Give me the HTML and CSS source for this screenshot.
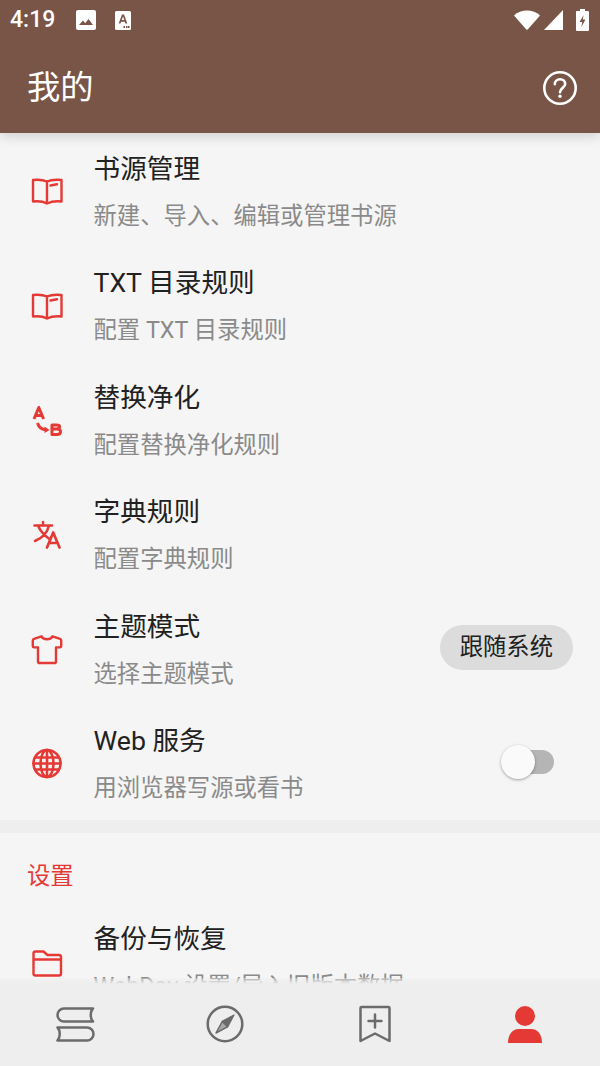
FILE: index.html
```html
<!DOCTYPE html>
<html lang="zh-CN">
<head>
<meta charset="utf-8">
<title>我的</title>
<link rel="stylesheet" href="styles.css">
</head>
<body>
<div class="screen">
  <header class="appbar">
    <div class="status">
      <div class="status-left">
        <span class="time">4:19</span>
        <svg class="st-img" viewBox="0 0 20 20"><path fill="#fff" fill-rule="evenodd" d="M2 0h16a2 2 0 0 1 2 2v16a2 2 0 0 1-2 2H2a2 2 0 0 1-2-2V2a2 2 0 0 1 2-2zM3 15h14l-4.500-6-3.300 4.200-2.200-2.600z"/></svg>
        <svg class="st-a" viewBox="0 0 16 19"><path fill="#fff" fill-rule="evenodd" d="M1.500 0h13A1.500 1.500 0 0 1 16 1.500v16a1.500 1.500 0 0 1-1.500 1.500h-13A1.500 1.500 0 0 1 0 17.500v-16A1.500 1.500 0 0 1 1.500 0zM7 3.500 3.700 12.500h1.800l.6-1.800h3.700l.6 1.800h1.900L9 3.500zM6.700 9.100l1.400-3.700 1.200 3.700zM8.500 15v2h1.500v-2zM11 15v2h1.500v-2zM13 15v2h1.500v-2z"/></svg>
      </div>
      <div class="status-right">
        <svg class="st-wifi" viewBox="0 0 26 20"><path fill="#fff" d="M0 5.500C3.500 2.200 8 .5 13 .5s9.500 1.700 13 5L13.700 19.500a1 1 0 0 1-1.400 0z"/></svg>
        <svg class="st-cell" viewBox="0 0 19 20"><path fill="#fff" d="M19 0v20H0z"/></svg>
        <svg class="st-batt" viewBox="0 0 13 22"><path fill="#fff" fill-rule="evenodd" d="M4 0h5v2h3a1 1 0 0 1 1 1v18a1 1 0 0 1-1 1H1a1 1 0 0 1-1-1V3a1 1 0 0 1 1-1h3zM7.600 6 3.600 13h2.600l-.8 5 4-7.500H6.800z"/></svg>
      </div>
    </div>
    <div class="toolbar">
      <h1 class="title">我的</h1>
      <svg class="help" viewBox="0 0 36 36" fill="none" stroke="#fff" stroke-width="2.600"><circle cx="18" cy="18" r="15.700"/><path stroke-linecap="round" d="M12.800 14.300c0-3 2.300-5 5.200-5s5.200 1.900 5.200 4.700c0 3.800-5.200 4-5.200 8.200"/><circle cx="18" cy="26.300" r="1.700" fill="#fff" stroke="none"/></svg>
    </div>
  </header>

  <main class="content">
    <section class="group">
      <div class="row">
        <svg class="ico" viewBox="0 0 40 40"><path d="M6 9c5-.5 10-.3 14 1.500 4-1.800 9-2 14.500-1.500v21.500c-5.500-.5-10-.2-14.500 2-4-2.200-9-2.500-14-2zM20 10.500V32.500M23.500 14.500l6.500-1.300"/></svg>
        <div class="text"><div class="t">书源管理</div><div class="s">新建、导入、编辑或管理书源</div></div>
      </div>
      <div class="row">
        <svg class="ico" viewBox="0 0 40 40"><path d="M6 9c5-.5 10-.3 14 1.500 4-1.800 9-2 14.500-1.500v21.500c-5.500-.5-10-.2-14.500 2-4-2.200-9-2.500-14-2zM20 10.500V32.500M23.500 14.500l6.500-1.300"/></svg>
        <div class="text"><div class="t">TXT 目录规则</div><div class="s">配置 TXT 目录规则</div></div>
      </div>
      <div class="row">
        <svg class="ico" viewBox="0 0 40 40"><path stroke-width="3" stroke-linecap="butt" d="M7 19 11.800 7.500 16.600 19M8.700 15.500h6.200M10.500 23c1.200 3.800 4 6.300 8 6.800"/><path class="fillr" d="M17.500 26.500l5 3.500-5 3z"/><path stroke-width="3" d="M25 25v9.500h4.800c2.300 0 3.700-1.100 3.700-2.700s-1.300-2.700-3.500-2.700H25h4.500c2 0 3.100-.8 3.100-2.300S31.500 25 29.500 25z"/></svg>
        <div class="text"><div class="t">替换净化</div><div class="s">配置替换净化规则</div></div>
      </div>
      <div class="row">
        <svg class="ico" viewBox="0 0 40 40"><path stroke-width="2.500" d="M7.500 11.500h17.500M16 8v3.500M11 11.500c2.200 5.500 6.500 10 11.500 13.500M22 11.500c-1.500 6.500-6.500 12.500-14 15.500"/><path stroke-width="2.700" d="M20 33.500 26.200 18.500 32.500 33.500M22.200 29h8"/></svg>
        <div class="text"><div class="t">字典规则</div><div class="s">配置字典规则</div></div>
      </div>
      <div class="row">
        <svg class="ico" viewBox="0 0 40 40"><path d="M14.500 7.300c.8 2 3 3 5.500 3s4.700-1 5.500-3l7.500 2.500c.7.200 1.200.8 1.200 1.500v6c0 .6-.5 1.100-1.200 1.100h-4v14c0 .8-.7 1.600-1.500 1.600h-15c-.8 0-1.500-.8-1.500-1.600v-14h-4c-.7 0-1.200-.5-1.200-1.100v-6c0-.7.5-1.300 1.200-1.500z"/></svg>
        <div class="text"><div class="t">主题模式</div><div class="s">选择主题模式</div></div>
        <div class="pill">跟随系统</div>
      </div>
      <div class="row">
        <svg class="ico globe" viewBox="0 0 40 40"><circle cx="20" cy="20.500" r="13.500"/><ellipse cx="20" cy="20.500" rx="6.500" ry="13.500"/><path d="M20 7v27M8.500 14.500h23M8.500 26.500h23M6.500 20.500h27"/></svg>
        <div class="text"><div class="t">Web 服务</div><div class="s">用浏览器写源或看书</div></div>
        <div class="switch"><span class="thumb"></span></div>
      </div>
    </section>
    <div class="divider"></div>
    <section class="group">
      <div class="cat">设置</div>
      <div class="row">
        <svg class="ico" viewBox="0 0 40 40"><path d="M6.500 11.500a2 2 0 0 1 2-2h8l4 3.500H32a2 2 0 0 1 2 2V31.500a2 2 0 0 1-2 2H8.500a2 2 0 0 1-2-2zM6.500 17.500h27.500"/></svg>
        <div class="text"><div class="t">备份与恢复</div><div class="s">WebDav 设置/导入旧版本数据</div></div>
      </div>
    </section>
  </main>

  <nav class="nav">
    <div class="tab"><svg class="nico" viewBox="0 0 40 40"><path d="M38 4.500H9a6.500 6.500 0 0 0 0 13h29M38 4.500c-3 3-3 10 0 13M2.500 23.500h29.500a6.500 6.500 0 0 1 0 13H2.500M2.500 23.500c3 3 3 10 0 13"/></svg></div>
    <div class="tab"><svg class="nico" viewBox="0 0 40 40"><circle cx="20" cy="20" r="17.300"/><path class="grey" d="M29 11 22.800 22.800 17.200 17.200z"/><path class="thin" d="M11 29 17.200 17.500l5.300 5.300z"/></svg></div>
    <div class="tab"><svg class="nico" viewBox="0 0 40 40"><path d="M6.500 3h27a1 1 0 0 1 1 1v33L20 29.500 5.500 37V4a1 1 0 0 1 1-1zM20 10.500v13M13.500 17h13"/></svg></div>
    <div class="tab"><svg class="nico active" viewBox="0 0 40 40"><circle cx="20" cy="12" r="10"/><path d="M3 39c0-8 4-14 11-14h12c7 0 11 6 11 14z"/></svg></div>
  </nav>
</div>
</body>
</html>
```
FILE: styles.css
```css
* { box-sizing: border-box; }
html, body { margin: 0; padding: 0; }
body {
  font-family: Roboto, "Noto Sans CJK SC", sans-serif;
  background: #f5f5f5;
}
.screen {
  width: 600px;
  height: 1066px;
  display: flex;
  flex-direction: column;
  overflow: hidden;
}
.appbar {
  flex: 0 0 133px;
  background: #795548;
  color: #fff;
  position: relative;
  z-index: 2;
  box-shadow: 0 3px 12px rgba(0, 0, 0, .16);
}
.status {
  height: 40px;
  display: flex;
  justify-content: space-between;
  align-items: center;
}
.status-left { display: flex; align-items: center; padding-left: 10px; }
.status-right { display: flex; align-items: center; padding-right: 11px; }
.time { font-size: 23px; font-weight: 500; line-height: 40px; width: 66px; }
.st-img { width: 20px; height: 20px; }
.st-a { width: 16px; height: 19px; margin-left: 19px; }
.st-wifi { width: 26px; height: 20px; }
.st-cell { width: 19px; height: 20px; margin-left: 4px; }
.st-batt { width: 13px; height: 22px; margin-left: 13px; }
.toolbar {
  height: 93px;
  display: flex;
  justify-content: space-between;
  align-items: center;
  padding: 2px 22px 0 27px;
}
.title { margin: 0; font-size: 33.330px; font-weight: 400; line-height: 91px; }
.help { width: 36px; height: 36px; }
.content { flex: 1 1 0; min-height: 0; padding-top: 1px; overflow: hidden; background: #f5f5f5; }
.row {
  height: 114.400px;
  display: flex;
  align-items: center;
  padding: 0 27px 0 27px;
  gap: 26.500px;
}
.ico {
  flex: 0 0 40px;
  width: 40px;
  height: 40px;
  fill: none;
  stroke: #e53935;
  stroke-width: 2.400;
  stroke-linejoin: round;
  stroke-linecap: round;
}
.globe { stroke-width: 2.600; }
.fillr { fill: #e53935; stroke: none; }
.text { flex: 1 1 auto; min-width: 0; align-self: flex-start; padding-top: 17px; }
.t { font-size: 26.670px; line-height: 36px; color: #212121; }
.s { font-size: 23.330px; line-height: 36px; margin-top: 11px; color: #8a8a8a; white-space: nowrap; }
.pill {
  flex: none;
  height: 45px;
  line-height: 45px;
  padding: 0 20px;
  margin-bottom: 2px;
  border-radius: 23px;
  background: #dcdcdc;
  color: #212121;
  font-size: 23.330px;
}
.switch {
  flex: none;
  position: relative;
  width: 51px;
  height: 24px;
  margin: 0 19px 2px 0;
  border-radius: 12px;
  background: #b5b5b5;
}
.thumb {
  position: absolute;
  left: -2px;
  top: -5px;
  width: 34px;
  height: 34px;
  border-radius: 50%;
  background: #fafafa;
  box-shadow: 0 1px 3px rgba(0, 0, 0, .35);
}
.divider { height: 13px; background: #eeeeee; }
.cat {
  height: 71px;
  padding: 0 27px;
  line-height: 86px;
  font-size: 23.330px;
  color: #e53935;
}
.nav {
  flex: 0 0 88px;
  margin-top: -6px;
  display: flex;
  position: relative;
  z-index: 1;
  background: linear-gradient(rgba(238, 238, 238, .35), #eeeeee 6px);
}
.tab {
  flex: 1 1 0;
  display: flex;
  justify-content: center;
  align-items: center;
  padding-top: 4px;
}
.nico {
  width: 40px;
  height: 40px;
  fill: none;
  stroke: #6b6b6b;
  stroke-width: 2.500;
  stroke-linejoin: round;
  stroke-linecap: round;
}
.nico .grey { fill: #6b6b6b; stroke-width: 1.200; }
.nico .thin { stroke-width: 1.500; fill: #a8a8a8; }
.nico.active { fill: #e53935; stroke: none; }
```
